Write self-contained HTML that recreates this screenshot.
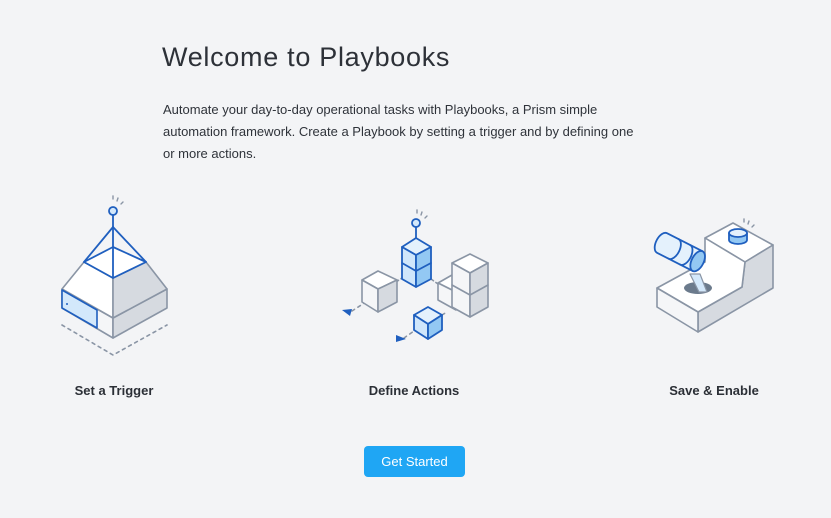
<!DOCTYPE html>
<html><head><meta charset="utf-8"><style>
body{margin:0;width:831px;height:518px;background:#f3f4f6;font-family:"Liberation Sans",sans-serif;color:#2b2f36;position:relative;overflow:hidden}
h1{position:absolute;left:162px;top:42px;margin:0;font-weight:normal;font-size:27px;letter-spacing:0.7px;color:#2d3138}
p{position:absolute;left:163px;top:99px;margin:0;font-size:13px;line-height:22px;width:482px;color:#2f333a}
.lbl{position:absolute;top:383px;font-size:13px;font-weight:bold;color:#2b2f36;transform:translateX(-50%);white-space:nowrap}
.btn{position:absolute;left:364px;top:446px;width:101px;height:31px;background:#1fa6f4;border-radius:4px;color:#fff;font-size:13px;text-align:center;line-height:31px}
svg{position:absolute;left:0;top:0}
</style></head><body>
<h1>Welcome to Playbooks</h1>
<p>Automate your day-to-day operational tasks with Playbooks, a Prism simple automation framework. Create a Playbook by setting a trigger and by defining one or more actions.</p>
<svg width="831" height="518" viewBox="0 0 831 518" fill="none" stroke-linejoin="round" stroke-linecap="round">
<g stroke="#8a95a5" stroke-width="1.6">
<polyline points="62,325 113,355 167,325" stroke-dasharray="3,4"/>
<polygon points="62,289 113,318 113,338 62,308" fill="#f5f6f8"/>
<polygon points="113,318 167,289 167,308 113,338" fill="#d6dae0"/>
<polygon points="62,289 84,262 113,278 113,318" fill="#fff"/>
<polygon points="113,278 146,262 167,289 113,318" fill="#d6dae0"/>
</g>
<polygon points="62,290 97,310 97,328 62,308" fill="#d3e8fb" stroke="#1f5fbf" stroke-width="1.6"/>
<circle cx="67" cy="304" r="1" fill="#1f5fbf"/>
<g stroke="#1f5fbf" stroke-width="1.8" fill="none">
<polygon points="84,262 113,247 146,262 113,278" fill="#fff"/>
<line x1="84" y1="262" x2="113" y2="227"/><line x1="146" y1="262" x2="113" y2="227"/><line x1="113" y1="278" x2="113" y2="227"/>
<line x1="113" y1="227" x2="113" y2="215"/>
<circle cx="113" cy="211" r="4" fill="#d3e8fb"/>
</g>
<g stroke="#8a95a5" stroke-width="1.4"><line x1="113" y1="196" x2="113" y2="199"/><line x1="118" y1="198" x2="117" y2="201"/><line x1="123" y1="202" x2="121" y2="204"/></g>

<g stroke="#8a95a5" stroke-width="1.6">
<line x1="352" y1="311" x2="372" y2="298" stroke-dasharray="3,4"/>
<line x1="404" y1="338" x2="414" y2="331" stroke-dasharray="3,4"/>
<line x1="396" y1="282" x2="402" y2="278" stroke-dasharray="3,3"/>
<line x1="431" y1="279" x2="438" y2="284" stroke-dasharray="3,3"/>
<line x1="442" y1="315" x2="447" y2="312" stroke-dasharray="3,3"/>
<polygon points="362,280 378,271 397,280 378,289" fill="#fff"/>
<polygon points="362,280 378,289 378,312 362,302" fill="#f5f6f8"/>
<polygon points="378,289 397,280 397,302 378,312" fill="#d6dae0"/>
<polygon points="438,283 452,275 470,284 456,292" fill="#fff"/>
<polygon points="438,283 456,292 456,310 438,300" fill="#f5f6f8"/>
<polygon points="452,263 470,254 488,263 470,273" fill="#fff"/>
<polygon points="452,263 470,273 470,317 452,307" fill="#f5f6f8"/>
<polygon points="470,273 488,263 488,307 470,317" fill="#d6dae0"/>
<line x1="452" y1="285" x2="470" y2="295"/><line x1="470" y1="295" x2="488" y2="285"/>
</g>
<polygon points="342,310 352,309 350,316" fill="#1f5fbf"/>
<polygon points="396,335 406,339 396,342" fill="#1f5fbf"/>
<g stroke="#1f5fbf" stroke-width="1.8">
<polygon points="402,247 416,238 431,247 416,255" fill="#e4f1fc"/>
<polygon points="402,247 416,255 416,287 402,279" fill="#cfe6fb"/>
<polygon points="416,255 431,247 431,279 416,287" fill="#93c8f3"/>
<line x1="402" y1="263" x2="416" y2="271"/><line x1="416" y1="271" x2="431" y2="263"/>
<line x1="416" y1="238" x2="416" y2="227"/>
<circle cx="416" cy="223" r="4" fill="#d3e8fb"/>
<polygon points="414,315 428,307 442,315 428,324" fill="#e4f1fc"/>
<polygon points="414,315 428,324 428,339 414,330" fill="#cfe6fb"/>
<polygon points="428,324 442,315 442,330 428,339" fill="#93c8f3"/>
</g>
<g stroke="#8a95a5" stroke-width="1.4"><line x1="417" y1="210" x2="417" y2="213"/><line x1="422" y1="212" x2="421" y2="215"/><line x1="427" y1="216" x2="425" y2="218"/></g>

<g stroke="#8a95a5" stroke-width="1.6">
<polygon points="705,238 733,223 773,245 745,262" fill="#fff"/>
<polygon points="745,262 773,245 773,288 698,332 698,312 742,287" fill="#d6dae0"/>
<polygon points="657,288 690,270 705,262 705,238 745,262 742,287 698,312" fill="#fff"/>
<polygon points="657,288 698,312 698,332 657,307" fill="#f5f6f8"/>
</g>
<ellipse cx="698" cy="288" rx="14" ry="6" fill="#6b7a8c"/>
<polygon points="690,274 700,274 707,292 699,292" fill="#d3e8fb" stroke="#8a95a5" stroke-width="1.2"/>
<g stroke="#1f5fbf" stroke-width="1.8" transform="translate(662,243) rotate(27)">
<path d="M0,-11 L40,-11 L40,11 L0,11 A6,11 0 0 1 0,-11 Z" fill="#e4f1fc"/>
<path d="M13,-11 a6,11 0 0 1 0,22"/><path d="M26,-11 a6,11 0 0 1 0,22"/>
<ellipse cx="40" cy="0" rx="6" ry="11" fill="#93c8f3"/>
</g>
<g stroke="#1f5fbf" stroke-width="1.8">
<path d="M729,233 v7 a9,4 0 0 0 18,0 v-7" fill="#93c8f3"/>
<ellipse cx="738" cy="233" rx="9" ry="4" fill="#e4f1fc"/>
</g>
<g stroke="#8a95a5" stroke-width="1.4"><line x1="744" y1="219" x2="744" y2="222"/><line x1="749" y1="221" x2="748" y2="224"/><line x1="754" y1="225" x2="752" y2="227"/></g>
</svg>
<div class="lbl" style="left:114px">Set a Trigger</div>
<div class="lbl" style="left:414px">Define Actions</div>
<div class="lbl" style="left:714px">Save &amp; Enable</div>
<div class="btn">Get Started</div>
</body></html>
